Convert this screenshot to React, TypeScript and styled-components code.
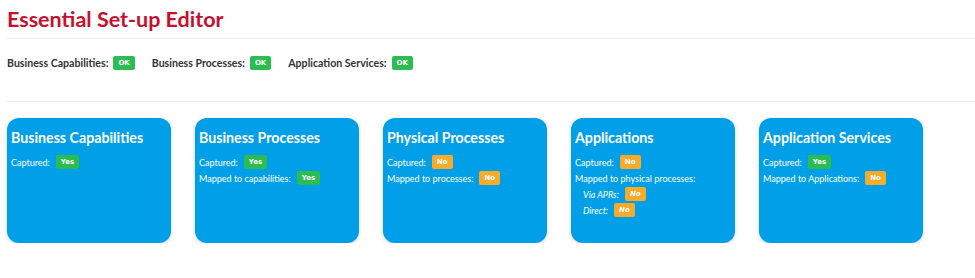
import React from "react";
import styled, { createGlobalStyle } from "styled-components";

const GlobalStyle = createGlobalStyle`
  body {
    margin: 0;
    background: #fff;
    font-family: "Lato", "Open Sans", sans-serif;
    color: #333;
  }
`;

const Page = styled.div`
  padding: 4px 0 0 7px;
`;

const Title = styled.h1`
  margin: 0;
  font-size: 21.5px;
  line-height: 30px;
  font-weight: 700;
  color: #c8102e;
`;

const Divider = styled.hr<{ $flush?: boolean }>`
  margin: ${(p) => (p.$flush ? "0" : "4px 0 0")};
  border: 0;
  border-top: 1px solid #eeeeee;
`;

const StatusBar = styled.div`
  display: flex;
  align-items: flex-start;
  gap: 17px;
  height: 62px;
  padding-top: 17px;
  box-sizing: border-box;
`;

const StatusItem = styled.div`
  display: flex;
  align-items: center;
  gap: 5px;
  height: 14px;
  font-size: 10.6px;
  font-weight: 700;
  color: #333;
`;

const Badge = styled.span<{ $tone: "ok" | "warn" }>`
  display: inline-flex;
  align-items: center;
  justify-content: center;
  height: 14px;
  padding: 0 5px;
  border-radius: 2px;
  background: ${(p) => (p.$tone === "ok" ? "#2bbd52" : "#f7ab2b")};
  color: #fff;
  font-family: "DejaVu Sans", sans-serif;
  font-size: 7px;
  font-weight: 700;
`;

const CardRow = styled.div`
  display: flex;
  gap: 24px;
  margin-top: 16px;
`;

const Card = styled.div`
  width: 164px;
  height: 125px;
  box-sizing: border-box;
  padding: 11px 4px 0;
  border-radius: 12px;
  background: #009fe8;
  color: #fff;
  box-shadow: 0 1px 4px rgba(0, 0, 0, 0.18);
`;

const CardTitle = styled.h3`
  margin: 0 0 8px;
  font-size: 14.2px;
  line-height: 18px;
  font-weight: 700;
`;

const CardList = styled.div`
  display: flex;
  flex-direction: column;
  gap: 2px;
`;

const CheckRow = styled.div<{ $indent?: boolean }>`
  display: flex;
  align-items: center;
  gap: 6px;
  height: 14px;
  padding-left: ${(p) => (p.$indent ? "8px" : "0")};
  font-size: 9px;
  font-style: ${(p) => (p.$indent ? "italic" : "normal")};
`;

type Check = { label: string; value?: "Yes" | "No"; indent?: boolean };

const cards: { title: string; checks: Check[] }[] = [
  { title: "Business Capabilities", checks: [{ label: "Captured:", value: "Yes" }] },
  {
    title: "Business Processes",
    checks: [
      { label: "Captured:", value: "Yes" },
      { label: "Mapped to capabilities:", value: "Yes" },
    ],
  },
  {
    title: "Physical Processes",
    checks: [
      { label: "Captured:", value: "No" },
      { label: "Mapped to processes:", value: "No" },
    ],
  },
  {
    title: "Applications",
    checks: [
      { label: "Captured:", value: "No" },
      { label: "Mapped to physical processes:" },
      { label: "Via APRs:", value: "No", indent: true },
      { label: "Direct:", value: "No", indent: true },
    ],
  },
  {
    title: "Application Services",
    checks: [
      { label: "Captured:", value: "Yes" },
      { label: "Mapped to Applications:", value: "No" },
    ],
  },
];

const summary = ["Business Capabilities:", "Business Processes:", "Application Services:"];

export default function App() {
  return (
    <Page>
      <GlobalStyle />
      <Title>Essential Set-up Editor</Title>
      <Divider />
      <StatusBar>
        {summary.map((s) => (
          <StatusItem key={s}>
            {s}
            <Badge $tone="ok">OK</Badge>
          </StatusItem>
        ))}
      </StatusBar>
      <Divider $flush />
      <CardRow>
        {cards.map((c) => (
          <Card key={c.title}>
            <CardTitle>{c.title}</CardTitle>
            <CardList>
              {c.checks.map((ch) => (
                <CheckRow key={ch.label} $indent={ch.indent}>
                  <span>{ch.label}</span>
                  {ch.value && <Badge $tone={ch.value === "Yes" ? "ok" : "warn"}>{ch.value}</Badge>}
                </CheckRow>
              ))}
            </CardList>
          </Card>
        ))}
      </CardRow>
    </Page>
  );
}
